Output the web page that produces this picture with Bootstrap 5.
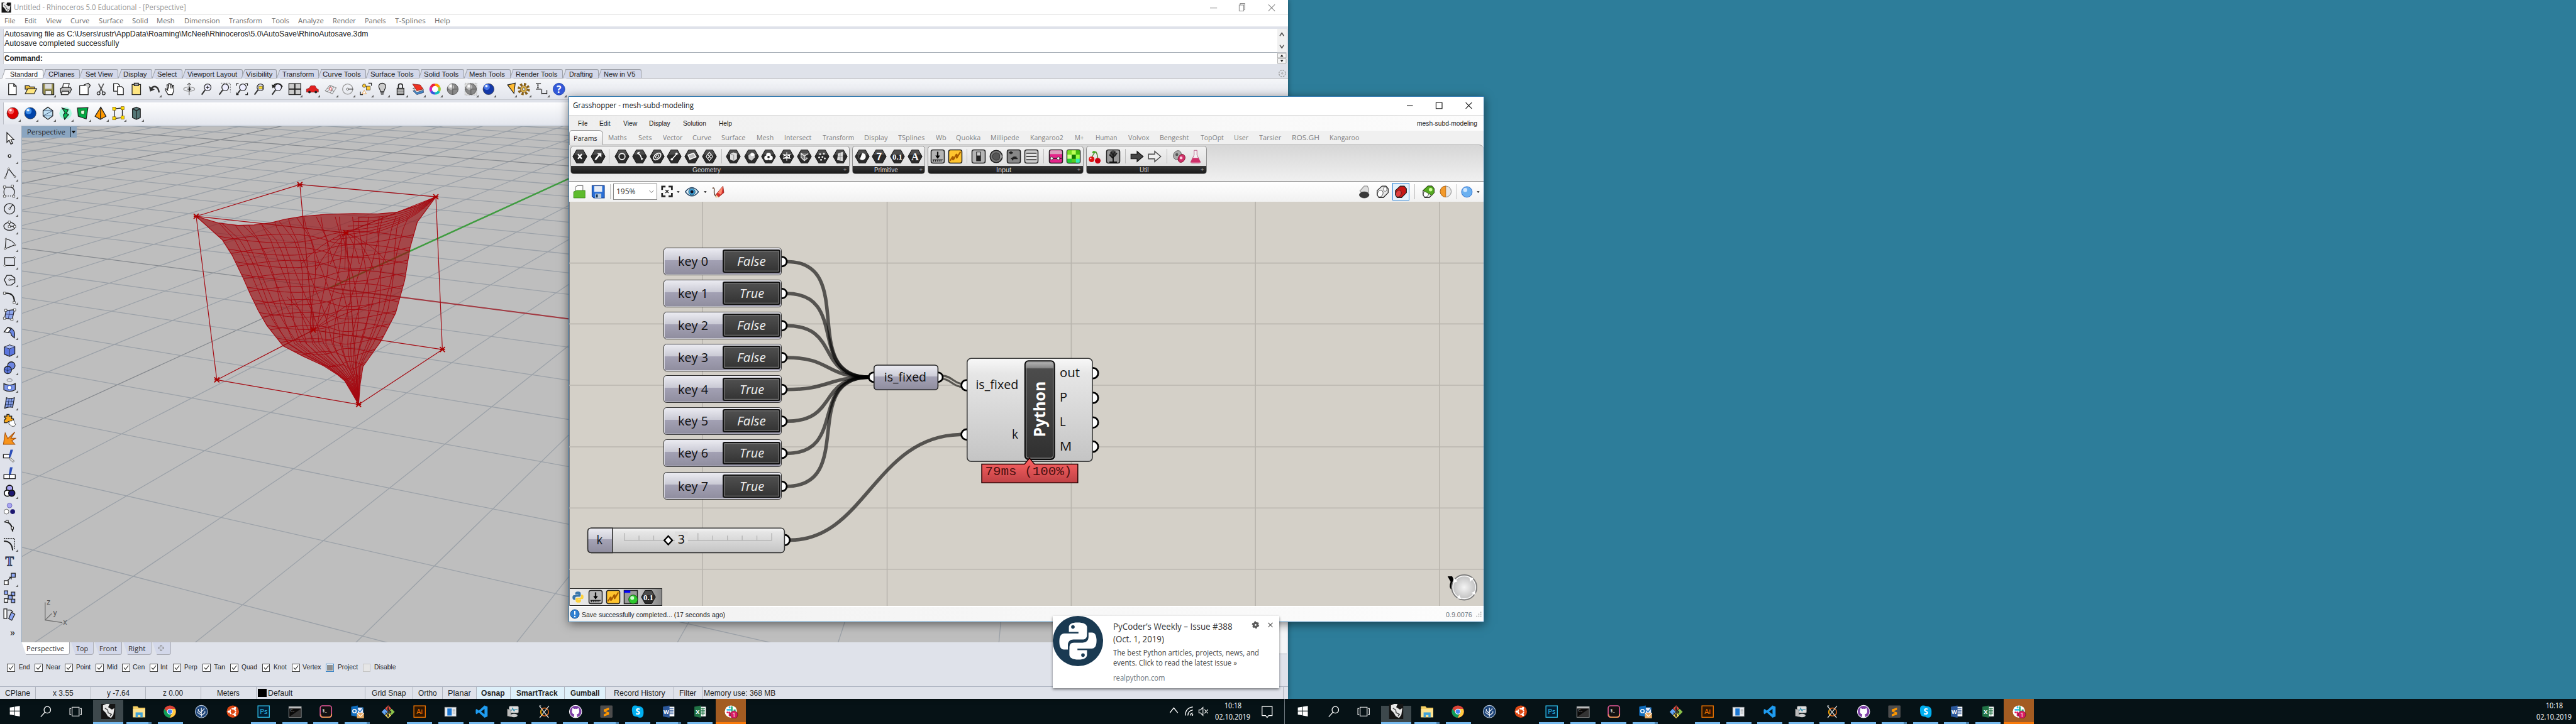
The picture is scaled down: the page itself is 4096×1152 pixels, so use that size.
<!DOCTYPE html>
<html lang="en">
<head>
<meta charset="utf-8">
<title>Desktop - Rhinoceros and Grasshopper</title>
<link href="https://cdn.jsdelivr.net/npm/bootstrap@5.3.0/dist/css/bootstrap.min.css" rel="stylesheet">
<style>
/* .1rem is one unit of the 5120x1440 desktop */
html{font-size:8px}
body{width:512rem;height:144rem;overflow:hidden;background:#2d7d9a;font-family:"Open Sans","Noto Sans",sans-serif;font-size:1.45rem;line-height:1;color:#222}
svg{display:block;flex:none}
.line{display:flex;align-items:center}
.line>*{flex:none}
.fit{white-space:pre;display:inline-block;flex:none;transform-origin:0 50%}
.desk{height:139rem}
/* Rhino */
.rhino{width:256rem;height:139rem;background:#dfe2ea;overflow:hidden;box-shadow:0 0 1rem rgba(0,0,0,.4)}
.r-title{height:2.9rem;background:#fff;color:#949494;font-size:1.5rem}
.r-menu{height:2.3rem;background:#fff;border-top:1px solid #e0e0e0;color:#6c6c6c;font-size:1.45rem}
.r-cmd{height:7rem;margin:.6rem .3rem 0 .6rem;background:#fff;border-left:.2rem solid #c9ccd3;font-family:"Liberation Sans",sans-serif;font-size:1.5rem;color:#222}
.r-hist{height:4.7rem;border-bottom:.15rem solid #a9b0b8;padding:.1rem 0 0 .2rem}
.r-hist .line{height:1.8rem}
.r-in{height:2.2rem;padding-left:.2rem;font-weight:700}
.r-scroll{width:1.8rem;background:#f0f0f0}
.r-tabs{height:1.8rem;margin-top:1rem;border-bottom:.12rem solid #b3b5ba;font-family:"Liberation Sans",sans-serif;font-size:1.42rem;align-items:stretch}
.rt{height:1.7rem;background:#d3d8ea;border-top:.1rem solid #9c9fa6;border-right:.1rem solid #9c9fa6;border-radius:0 .4rem 0 0;position:relative;display:flex;align-items:center;padding-top:.2rem}
.rt::before{content:"";position:absolute;left:-.3rem;top:-.1rem;width:.7rem;height:1.7rem;border-left:.1rem solid #9c9fa6;transform:skewX(-20deg);background:#d3d8ea}
.rt .fit{position:relative}
.rt.act,.rt.act::before{background:#fbfbfd}
.r-bar{height:4.3rem;background:linear-gradient(#f5f6f9,#e2e5ec);border-bottom:.1rem solid #c3c6cd}
.r-bar2{height:4.3rem;margin-top:.5rem;background:linear-gradient(#fdfdfe,#e4e7ee);border-left:.7rem solid #dfe2ea;box-shadow:inset .12rem 0 #b9bcc4}
.r-body{height:105.3rem;margin-top:.3rem}
.r-side{width:4.3rem;flex:none;height:105.1rem;padding-top:.8rem}
.r-tool{height:3.506rem;display:flex;align-items:center;justify-content:center;position:relative;width:3.8rem}
.r-tool.more::after,.hasmore::after{content:"";position:absolute;right:.2rem;bottom:.2rem;border:.35rem solid transparent;border-right-color:#666;border-bottom-color:#666}
.hasmore{position:relative}
.hasmore::after{right:-.2rem;bottom:-.3rem}
.r-main{flex:1 1 0;min-width:0}
.r-view{height:102.7rem;background:#bebebe;position:relative;overflow:hidden;border-top:.1rem solid #98a8b8;border-left:.1rem solid #98a8b8}
.r-vlabel{position:absolute;left:0;top:0;width:10.8rem;height:2.3rem;background:#8aa5c0;color:#222}
.r-panel{width:8rem;flex:none;background:#f4f5f7;border-bottom:.15rem solid #aab0bb;height:105.1rem;margin-right:.2rem}
.r-vtabs{height:2.6rem;font-size:1.45rem;color:#333}
.vt{height:2.6rem;background:#d3d8ea;border-bottom:.1rem solid #a7a9b0;border-right:.1rem solid #a7a9b0;border-radius:0 0 .5rem .5rem;display:flex;align-items:center;justify-content:center;clip-path:polygon(0 0,100% 0,100% 100%,.9rem 100%)}
.vt.act{background:#fff}
.r-osnap{height:3.2rem;margin-top:.9rem;font-family:"Liberation Sans",sans-serif;font-size:1.48rem}
.cb{width:1.6rem;height:1.6rem;border:.12rem solid #444;background:#fff;display:flex}
.cb.dis{border-color:#c5c5c5;background:#e6e6e6}
.cb.mid{border:.2rem solid #3a83c4;background:#8f8f8f;box-shadow:inset 0 0 0 .12rem #fff}
.r-status{height:2.5rem;margin-top:auto;border-top:.12rem solid #a9b0bd;font-family:"Liberation Sans",sans-serif;font-size:1.5rem}
.cell{height:2.4rem;border-right:.12rem solid #b0b4be;display:flex;align-items:center;justify-content:center}
.cell.on{background:#def0fa;font-weight:700}
/* Grasshopper */
.gh{position:absolute;left:113rem;top:19.1rem;width:182rem;height:104.6rem;border:.12rem solid #2b76ad;background:#f0f0f0;box-shadow:0 .4rem 1.8rem rgba(0,0,0,.5);display:flex;flex-direction:column}
.g-title{height:3.8rem;background:#fff;color:#111;font-size:1.5rem;border-bottom:.1rem solid #dcdcdc}
.g-menu{height:3rem;background:linear-gradient(90deg,#efefef,#fcfcfc);font-size:1.42rem;font-family:"Liberation Sans",sans-serif}
.g-tabs{height:2.7rem;color:#808080;font-size:1.45rem;background:#f0f0f0;position:relative}
.g-tabs .fit{position:relative}
.g-first{height:2.9rem;background:linear-gradient(#fff,#e4e4e4);border:.1rem solid #999;border-bottom:0;border-radius:.6rem .8rem 0 0;color:#222;display:flex;align-items:center;padding-left:.7rem}
.g-ribbon{height:7.4rem;background:linear-gradient(#d6d6d6,#f0f0f0);border-top:.15rem solid #a0a0a0;border-bottom:.2rem solid #868686;border-radius:0 .9rem 0 0;align-items:flex-start;padding-top:.2rem}
.g-grp{height:5.6rem;border:.12rem solid #8e8e8e;border-radius:.6rem;background:linear-gradient(#f2f2f2,#d9d9d9);overflow:hidden;display:flex;flex-direction:column}
.g-ics{height:3.8rem}
.g-lab{flex:1;background:linear-gradient(#363636,#1a1a1a);color:#ddd;font-size:1.35rem;font-family:"Liberation Sans",sans-serif;display:flex;align-items:center;position:relative}
.g-lab i{position:absolute;right:.4rem;font-style:normal;font-size:1.2rem;color:#aaa}
.vsep{width:.12rem;height:2.9rem;background:#bdbdbd}
.g-bar{height:4rem;background:linear-gradient(#fff,#f1f1f1)}
.combo{height:3.2rem;border:.12rem solid #8a8a8a;background:#fff;display:flex;align-items:center;padding:0 .4rem;font-size:1.55rem;color:#333}
.sel{height:3.4rem;border:.15rem solid #2f87d8;background:#e6f1fb;display:flex;align-items:center;justify-content:center}
.g-canvas{height:80.4rem;position:relative;background:#d4d0c8;overflow:hidden;box-shadow:inset .12rem 0 #7c7c80}
.g-status{flex:1;background:linear-gradient(90deg,#f1f1f1,#fcfcfc);border-top:.3rem solid #fff;font-size:1.45rem;font-family:"Liberation Sans",sans-serif}
.knode{position:absolute;width:23.5rem;height:5.5rem;left:18.7rem;border:.18rem solid #333;border-radius:.6rem;background:linear-gradient(#ececf2,#c9c9d4 45%,#a3a1b4 46%,#8f8d9e);box-shadow:inset 0 0 0 .1rem #e8e8ee;font-size:2.4rem;color:#111}
.kname{width:11.7rem;text-align:center}
.kval{width:11.5rem;height:4.6rem;border:.25rem solid #111;border-radius:.4rem;background:linear-gradient(#505050,#333);box-shadow:inset 0 0 0 .15rem #777;color:#eee;font-style:italic}
.mini{position:absolute;left:.1rem;bottom:0;width:18.4rem;height:3.5rem;border:.15rem solid #222;border-left:0;background:linear-gradient(90deg,#ececec,#cfcfcf 70%,#888)}
/* notification */
.note{position:absolute;left:209.2rem;top:122.5rem;width:45rem;height:14.4rem;background:#fff;box-shadow:0 .2rem .5rem rgba(0,0,0,.45)}
.n-txt{padding:.9rem 0 0 2rem;flex:none;width:31rem}
.n-txt .line{white-space:pre;height:2rem;font-size:1.55rem;color:#444}
.n-txt .n-head{height:2.5rem;font-size:1.8rem;color:#333}
/* taskbars */
.tbar{width:256rem;height:5rem;background:#061216;color:#fff}
.app{height:5rem;display:flex;flex-direction:column;align-items:center;justify-content:center;position:relative}
.app.on::after{content:"";position:absolute;left:.5rem;right:.5rem;bottom:0;height:.35rem;background:#76b9ed}
.app.two::after{border-right:.7rem solid #4a7fa8}
.app.rh{background:linear-gradient(#061216 .2rem,#3d484c .2rem)}
.tbar.second .app.rh{background:linear-gradient(#061216 1.4rem,#3d484c 1.4rem)}
.app.rh::after,.app.sl::after{left:0;right:0}
.app.sl{background:#a35c22}
.app.sl::after{background:#f97a0a}
.clock{display:flex;flex-direction:column;align-items:center;justify-content:space-between;height:3.8rem;font-size:1.55rem}
</style>
</head>
<body>
<div class="desk position-relative">
  <section class="rhino d-flex flex-column">
    <div class="r-title line" id="rTitle"></div>
    <div class="r-menu line" id="rMenu"></div>
    <div class="r-cmd d-flex">
      <div class="flex-grow-1">
        <div class="r-hist">
          <div class="line"><span class="fit" data-w="723">Autosaving file as C:\Users\rustr\AppData\Roaming\McNeel\Rhinoceros\5.0\AutoSave\RhinoAutosave.3dm</span></div>
          <div class="line"><span class="fit" data-w="228">Autosave completed successfully</span></div>
        </div>
        <div class="r-in line"><span class="fit" data-w="76">Command:</span></div>
      </div>
      <div class="r-scroll"><svg viewBox="0 0 18 70" width="1.8rem" height="7rem"><path d="M5 14l4-6 4 6M5 32l4 6 4-6" fill="none" stroke="#555" stroke-width="2"/><path d="M0 47h18" stroke="#a9b0b8"/><path d="M.5 48.500h17v9h-17zM.5 59h17v9.500h-17z" fill="#f3f3f3" stroke="#999"/><path d="M6 55l3-4 3 4zM6 62l3 4 3-4z" fill="#111"/></svg></div>
    </div>
    <div class="r-tabs line" id="rTabs"></div>
    <div class="r-bar line" id="rBar"></div>
    <div class="r-bar2 line" id="rBar2"></div>
    <div class="r-body d-flex">
      <div class="r-side" id="rSide"></div>
      <div class="r-main">
        <div class="r-view">
          <svg id="view" viewBox="43 252 2460 1027" width="246rem" height="102.7rem"></svg>
          <div class="r-vlabel line" id="vLabel"></div>
        </div>
        <div class="r-vtabs line" id="vTabs"></div>
      </div>
      <div class="r-panel"></div>
    </div>
    <div class="r-osnap line" id="osnap"></div>
    <div class="r-status line" id="rStatus"></div>
  </section>

  <section class="gh">
    <div class="g-title line" id="gTitle"></div>
    <div class="g-menu line" id="gMenu"></div>
    <div class="g-tabs line" id="gTabs"></div>
    <div class="g-ribbon line" id="gRibbon"></div>
    <div class="g-bar line" id="gBar"></div>
    <div class="g-canvas" id="canvas">
      <svg id="wires" viewBox="1131 402 1818 804" width="181.8rem" height="80.4rem"></svg>
      <div class="mini line" id="mini"></div>
    </div>
    <div class="g-status line" id="gStatus"></div>
  </section>

  <section class="note d-flex">
    <svg viewBox="0 0 100 100" width="10rem" height="10rem"><circle cx="50" cy="50" r="50" fill="#1a3a52"/>
      <path id="snake" d="M49 13c-11 0-17 3-17 10v9h19v3H23c-7 0-10 6-10 16 0 10 3 16 9 16h8v-9c0-7 5-11 11-11h18c6 0 9-4 9-9V23c0-7-7-10-19-10z" fill="#fff"/><circle cx="40" cy="22" r="3.500" fill="#1a3a52"/>
      <path d="M51 87c11 0 17-3 17-10v-9H49v-3h28c7 0 10-6 10-16 0-10-3-16-9-16h-7v9c0 7-5 11-11 11H42c-6 0-9 4-9 9v15c0 7 7 10 18 10z" fill="#fff"/><circle cx="60" cy="78" r="3.500" fill="#1a3a52"/><path d="M69 33v9c0 6-4 10-10 10H41c-6 0-9 4-9 10v5" fill="none" stroke="#1a3a52" stroke-width="1.500"/></svg>
    <div class="n-txt">
      <div class="line n-head"><span class="fit" data-w="237">PyCoder’s Weekly – Issue #388</span></div>
      <div class="line n-head"><span class="fit" data-w="101">(Oct. 1, 2019)</span></div>
      <div class="line mt-2"><span class="fit" data-w="290">The best Python articles, projects, news, and</span></div>
      <div class="line"><span class="fit" data-w="246">events. Click to read the latest issue »</span></div>
      <div class="line mt-3 text-secondary"><span class="fit" data-w="103">realpython.com</span></div>
    </div>
    <svg class="position-absolute end-0 top-0" viewBox="0 0 60 36" width="6rem" height="3.6rem"><circle cx="13" cy="18" r="3.800" fill="none" stroke="#5a5a5a" stroke-width="4"/><circle cx="13" cy="18" r="6" fill="none" stroke="#5a5a5a" stroke-width="2.500" stroke-dasharray="3.200 3.080"/><path d="M38 13.500l9 9M47 13.500l-9 9" stroke="#444" stroke-width="1.300"/></svg>
  </section>
</div>
<div class="d-flex">
  <div class="tbar line" id="bar1"></div>
  <div class="tbar second line" id="bar2"></div>
</div>

<script src="https://cdn.jsdelivr.net/npm/bootstrap@5.3.0/dist/js/bootstrap.bundle.min.js"></script>
<script>
const $=id=>document.getElementById(id);
const svg=(inner,w=26,h=w,vb='0 0 32 32')=>`<svg viewBox="${vb}" width="${w/10}rem" height="${h/10}rem">${inner}</svg>`;
const fit=(t,w)=>`<span class="fit" data-w="${w}">${t}</span>`;
/* lays items out left to right; each one is [content, start, end, class, inner width] */
function row(id,items,x=0){
  $(id).insertAdjacentHTML('beforeend',items.map(([c,a,b,cls,w])=>{
    const m=a-x;x=b;
    const inner=c.startsWith('<')?c:fit(c,w||b-a);
    return `<div class="${cls||''}" style="margin-left:${m/10}rem;width:${(b-a)/10}rem">${inner}</div>`;
  }).join(''));
}
const cen=(list,s,cls)=>list.map(([n,c,k])=>[svg(I[n],s),c-s/2,c+s/2,k===undefined?cls:k]);
const K='stroke="#222" stroke-width="1.800"',N='fill="none"';
const ball=(c,d)=>`<circle cx="16" cy="16" r="13" fill="${d}" stroke="#333"/><circle cx="12" cy="11" r="7" fill="${c}" opacity=".75"/><circle cx="11" cy="9" r="3" fill="#fff" opacity=".9"/>`;
const cyl=(c,d)=>`<path d="M4 13L15 3h9l5 6v9L18 29H8l-4-6z" fill="${c}" ${K}/><ellipse cx="11" cy="20" rx="6" ry="8" transform="rotate(25 11 20)" fill="${d}" stroke="#222"/>`;
const HX=i=>`<path d="M9 2h14l8 14-8 14H9L1 16z" fill="#2a2a2a" stroke="#000"/><path d="M9.500 3h13l5 9h-23z" fill="#666" opacity=".6"/>${i}`;
const SQ=(i,f='#b5b5b5')=>`<rect x="2" y="2" width="28" height="28" rx="4" fill="${f}" stroke="#222" stroke-width="2"/>${i}`;
const W='stroke="#fff" stroke-width="2.200" fill="none"';
const scrib=SQ('<path d="M5 25l5-8q2-2 1 3t2 1l5-9q2-2 1 4t2 0l6-10" fill="none" stroke="#a85c00" stroke-width="3"/>','#ffc42e');
const lens=`<circle cx="18" cy="12" r="8" fill="#eef" ${K}/><path d="M12 18L4 29" stroke="#333" stroke-width="3"/>`;
const I={
 page:`<path d="M7 3h12l6 6v20H7z" fill="#fff" ${K}/><path d="M19 3v6h6" ${N} ${K}/>`,
 open:`<path d="M3 8h9l3 3h10v5H3z" fill="#e5b93c" ${K}/><path d="M3 27l6-12h21l-6 12z" fill="#ffe680" ${K}/>`,
 save:`<path d="M3 3h26v26H6l-3-3z" fill="#9a9250" ${K}/><path d="M8 4h16v11H8z" fill="#ddd"/><path d="M9 20h14v9H9z" fill="#eee" stroke="#222"/>`,
 print:`<path d="M10 3h14l-3 11H8z" fill="#fff" ${K}/><path d="M3 15l5-3h19l2 5-4 8H4z" fill="#bbb" ${K}/><path d="M7 21h16l-2 8H5z" fill="#eee" ${K}/>`,
 props:`<path d="M4 8h20v21H4z" fill="#fff" ${K}/><path d="M14 6l10-4 5 5-3 6" fill="#ccc" ${K}/>`,
 cut:`<path d="M10 3l10 20M22 3L12 23" stroke="#555" stroke-width="2.500"/><circle cx="10" cy="26" r="3.500" ${N} ${K}/><circle cx="22" cy="26" r="3.500" ${N} ${K}/>`,
 copy:`<path d="M4 3h10l4 4v14H4z" fill="#fff" ${K}/><path d="M13 10h10l4 4v15H13z" fill="#fff" ${K}/>`,
 paste:`<rect x="6" y="5" width="20" height="24" fill="#ffe680" ${K}/><rect x="11" y="2" width="10" height="6" fill="#aaa" ${K}/>`,
 undo:`<path d="M4 9l3 13 11-5z" fill="#333"/><path d="M8 17C15 6 26 8 28 24" ${N} stroke="#333" stroke-width="3.500"/>`,
 hand:`<path d="M11 29C6 22 4 18 4 15c3-1 4 3 6 4L8 6c3-1 4 1 4 9V3c3-1 4 0 4 11V4c3-1 4 1 4 11l2-8c3 0 2 3 2 9 0 7-2 9-3 13z" fill="#fff" ${K}/>`,
 rotv:`<ellipse cx="16" cy="16" rx="13" ry="5" ${N} stroke="#999" stroke-width="2"/><path d="M16 2v28M12 6l4-4 4 4" ${N} stroke="#555" stroke-width="1.600"/><path d="M12 16h9m-4-4v8" stroke="#222" stroke-width="2"/>`,
 zoomd:lens+`<path d="M14 12h8M18 8v8" ${K}/>`,
 zoomw:lens+`<path d="M8 2h22v22" ${N} stroke="#222" stroke-dasharray="3 3"/>`,
 zoome:lens+`<path d="M3 8V3h5M24 3h5v5M29 24v5h-5M3 24v5h5" ${N} ${K}/>`,
 zooms:lens+`<rect x="14" y="9" width="9" height="7" fill="#fd3" stroke="#333"/>`,
 zoomu:lens+`<path d="M3 5l2 9 8-5z" fill="#222"/><path d="M6 9c6-8 18-8 22 2" ${N} stroke="#222" stroke-width="2.500"/>`,
 four:`<rect x="2" y="3" width="28" height="26" fill="#ccc" ${K}/><path d="M16 3v26M2 16h28" stroke="#222" stroke-width="3"/>`,
 car:`<path d="M2 16l6-2 4-6h10l4 7 4 2v6H2z" fill="#e02020" stroke="#711"/><circle cx="9" cy="23" r="3" fill="#222"/><circle cx="24" cy="23" r="3" fill="#222"/>`,
 cplane:`<path d="M3 20L14 7l15 6-9 14zM8 14l15 7M16 9l-8 14M23 11l-8 14" ${N} stroke="#888" stroke-width="1.500"/><rect x="13" y="13" width="5" height="5" fill="#fff" stroke="#d22"/>`,
 circ:`<circle cx="16" cy="16" r="12" ${N} stroke="#999" stroke-width="2"/><path d="M16 16h13" ${K}/><circle cx="16" cy="16" r="2.500" fill="#fff" stroke="#222"/>`,
 shapes:`<circle cx="12" cy="8" r="4" fill="#fc3" stroke="#222"/><rect x="17" y="9" width="9" height="9" fill="#fc3" stroke="#222"/><path d="M7 27l5-8 5 8z" fill="#fff" stroke="#d70"/><path d="M22 2h7v6M3 22v7h6" ${N} ${K}/>`,
 bulb:`<path d="M16 2c-6 0-9 5-8 9 1 5 4 7 4 11h8c0-4 3-6 4-11 1-4-2-9-8-9z" fill="#ccc" ${K}/><path d="M12 25h8M13 28h6" ${K}/>`,
 lock:`<rect x="8" y="14" width="16" height="15" fill="#999" ${K}/><path d="M11 14V8c0-6 10-6 10 0v6" ${N} stroke="#222" stroke-width="2.500"/><path d="M9 19h14M9 24h14" stroke="#ddd"/>`,
 layer:`<path d="M4 20l9 9 16-5-1-6z" fill="#48c" stroke="#124"/><path d="M4 14l9 10 16-6-3-5z" fill="#eee" stroke="#333"/><path d="M3 4l18 2 7 10-15 4z" fill="#e32" stroke="#711"/>`,
 wheel:`<g ${N} stroke-width="6"><path d="M16 6a10 10 0 0 1 9 5" stroke="#f90"/><path d="M25 11a10 10 0 0 1 0 10" stroke="#9c3"/><path d="M25 21a10 10 0 0 1-9 5" stroke="#1bb"/><path d="M16 26a10 10 0 0 1-9-5" stroke="#35d"/><path d="M7 21a10 10 0 0 1 0-10" stroke="#c2b"/><path d="M7 11a10 10 0 0 1 9-5" stroke="#e23"/></g><circle cx="16" cy="16" r="7" fill="#fff"/>`,
 gball:ball('#eee','#888')+`<path d="M16 3v26M3 16h26" stroke="#444"/>`,
 gball2:`<rect x="2" y="2" width="28" height="28" fill="#ddd" stroke="#888" stroke-dasharray="2 2"/>`+ball('#eee','#888')+`<path d="M16 3v26M3 16h26" stroke="#444"/>`,
 bball:ball('#58f','#1438a8'), rball:ball('#f77','#d00'), bball2:ball('#5af','#04a'),
 tri:`<path d="M12 6l18-4-3 24z" fill="#fb3" ${K}/>`,
 gear:`<circle cx="16" cy="16" r="11" ${N} stroke="#876018" stroke-width="7" stroke-dasharray="5 3.640"/><circle cx="16" cy="16" r="8" fill="#dcb24a" stroke="#643"/><circle cx="16" cy="16" r="3" fill="#eee" stroke="#222"/>`,
 dim:`<path d="M3 3h12M3 16h12M8 5v9M17 16v12M29 18v10M18 26h10" ${N} ${K}/><path d="M6 7l2-3 2 3zM6 12l2 3 2-3z"/>`,
 help:`<circle cx="16" cy="16" r="14" fill="#3358d8" stroke="#123a9c"/><text x="16" y="24.500" font-size="23" font-weight="700" text-anchor="middle" fill="#fff">?</text>`,
 cage:`<path d="M16 2l11 8v12l-11 8-11-8V10z" fill="#bfe0f5" ${K}/><path d="M5 10h22L5 22h22" ${N} stroke="#124"/>`,
 green1:`<circle cx="16" cy="16" r="14" fill="#7fc" opacity=".6"/><path d="M8 4l14 4-4 8 5 3-9 11-3-10 4-5z" fill="#0b5" ${K}/>`,
 green2:`<path d="M3 4l24-1-4 26-18-6z" fill="#0a4" ${K}/><path d="M11 10l9-1-2 10-7-2z" fill="#dfd" stroke="#040"/>`,
 pyr:`<path d="M16 2l12 21-13 7-12-7z" fill="#f90" ${K}/><path d="M16 2l-1 28" ${K}/>`,
 ybox:`<path d="M7 6l18-2v22l-18 2z" ${N} ${K}/><g fill="#fd0" stroke="#750"><rect x="3" y="2" width="7" height="7"/><rect x="22" y="1" width="7" height="7"/><rect x="3" y="24" width="7" height="7"/><rect x="22" y="22" width="7" height="7"/></g>`,
 book:`<path d="M8 6l9-4 9 4v20l-9 4-9-4z" fill="#577" ${K}/><path d="M8 6l9 4 9-4M17 10v20" ${N} ${K}/>`,
 /* sidebar */
 arrow:`<path d="M10 3v22l5-5 4 9 4-2-4-8h7z" fill="#fff" ${K}/>`,
 pt:`<circle cx="16" cy="16" r="3" fill="#fff" ${K}/>`,
 pline:`<path d="M6 26L14 5l14 18" ${N} ${K}/><g fill="#fff" stroke="#222"><circle cx="6" cy="26" r="2"/><circle cx="14" cy="5" r="2"/><circle cx="28" cy="23" r="2"/></g>`,
 crv:`<path d="M6 7h14M5 26C2 20 3 14 5 9M20 7c8 4 8 12 5 19" ${N} ${K}/><path d="M7 27h16" ${N} ${K} stroke-dasharray="2 3"/><g fill="#fff" stroke="#222"><path d="M2 4h5v5H2zM20 2h5v5h-5zM23 25h5v5h-5zM2 25h5v5H2z"/></g>`,
 circ2:`<circle cx="16" cy="16" r="12" ${N} ${K}/><path d="M16 16l7-9" ${K}/><circle cx="16" cy="16" r="2" fill="#fff" stroke="#222"/>`,
 ell:`<ellipse cx="16" cy="16" rx="13" ry="9" ${N} ${K}/><path d="M16 5v11h12" ${N} ${K}/><g fill="#fff" stroke="#222"><path d="M13 4h5v5h-5zM13 14h5v5h-5zM25 14h5v5h-5z"/></g>`,
 arc:`<path d="M6 27L8 5c12 2 18 8 20 13z" ${N} ${K}/><g fill="#fff" stroke="#222"><circle cx="6" cy="27" r="2"/><circle cx="8" cy="5" r="2"/><circle cx="28" cy="18" r="2"/></g>`,
 rect:`<path d="M5 7h22v18H5z" ${N} ${K}/><g fill="#fff" stroke="#222"><circle cx="27" cy="7" r="2"/><circle cx="5" cy="25" r="2"/></g>`,
 poly:`<path d="M4 16l6-10h10l8 6v10l-8 6H10z" ${N} ${K}/><path d="M16 16h11" ${K}/><circle cx="16" cy="16" r="2" fill="#fff" stroke="#222"/>`,
 fil:`<path d="M5 7c14-2 22 4 22 20" ${N} stroke="#222" stroke-width="3"/><g fill="#fff" stroke="#222"><path d="M2 4h5v5H2zM24 25h5v5h-5z"/></g>`,
 srf:`<path d="M8 6l19-2-5 22-17-3z" fill="#8fa8ee" ${K}/><path d="M17 5l-4 20M6 14l19 1" stroke="#225"/><g fill="#fff" stroke="#222"><path d="M5 3h5v5H5zM25 2h5v5h-5zM2 21h5v5H2zM19 24h5v5h-5z"/></g>`,
 patch:`<path d="M4 14L12 4c12 1 18 10 15 24l-7-6c1-6-6-9-16-8z" fill="#6b87e0" ${K}/><path d="M4 14L12 4l7 4-6 8z" fill="#fff" ${K}/>`,
 box:`<path d="M4 9l12-5 12 4v16l-12 6-12-5z" fill="#5c76dd" ${K}/><path d="M4 9l12 4 12-5-12-4z" fill="#a9baf7" stroke="#222"/><path d="M16 13v17" stroke="#222"/>`,
 balls:`<circle cx="20" cy="11" r="8.500" fill="#6d86e2" ${K}/><circle cx="12" cy="21" r="8.500" fill="#5a74d8" ${K}/><path d="M3 20q9 4 17 0M12 12v17" ${N} stroke="#124"/>`,
 cyl2:`<ellipse cx="16" cy="4" rx="6" ry="3" ${N} stroke="#555"/><path d="M3 12q13 7 26 0v14q-13 7-26 0z" fill="#7f97ea" ${K}/><circle cx="16" cy="21" r="5" fill="#fff" stroke="#46c" stroke-width="2"/>`,
 mesh:`<path d="M9 4q8 4 18 0l-4 22q-8-2-18 2z" fill="#8aa2ec" ${K}/><path d="M15 5l-3 22M21 5l-3 21M7 12q9 3 18 0M6 20q9-1 18 0" ${N} stroke="#124"/>`,
 puz:`<path d="M4 6h6V2h5v4h6v6h4v5h-4v5h-5l-2-4-4 3H4v-6l4-4-4-3z" fill="#f7a81c" ${K}/><path d="M16 17h5l2-3 4 3v5l3 2-3 5h-6l-3-3-4-2z" fill="#fff" stroke="#222"/>`,
 boom:`<path d="M2 30L6 4l6 13L28 2 19 16l11 0-9 6 7 8z" fill="#f7941d" stroke="#a44a00" stroke-width="1.500"/>`,
 trim:`<path d="M2 13h14v8H2z" fill="#fff" ${K}/><path d="M18 20l9 8-3 3-8-7z" fill="#ddd" stroke="#444"/><path d="M14 20L18 2h6l-5 16z" fill="#2d4fb8"/>`,
 split:`<path d="M3 19h26v9H3zM16 19v9" fill="#fff" ${K}/><path d="M14 19L17 2h6l-4 17z" fill="#2d4fb8"/>`,
 bool:`<circle cx="16" cy="10" r="7" fill="#a9a4f2" stroke="#111" stroke-width="2.500"/><circle cx="11" cy="21" r="7" fill="#fff" stroke="#111" stroke-width="2.500"/><circle cx="21" cy="21" r="7" fill="#1b1670" stroke="#111" stroke-width="2.500"/>`,
 three:`<circle cx="16" cy="9" r="5.500" fill="#a9a4f2" stroke="#55a"/><circle cx="9" cy="23" r="5.500" fill="#fff" stroke="#222"/><circle cx="23" cy="23" r="5.500" fill="#1b1670"/>`,
 ced:`<path d="M4 6c12 0 18 8 19 22" ${N} stroke="#222" stroke-width="3"/><g fill="#fff" stroke="#222" stroke-width="1.500"><path d="M8 3h5v5H8zM20 18h5v5h-5z"/></g>`,
 ced2:`<path d="M3 4h24v24" ${N} stroke="#222" stroke-width="2" stroke-dasharray="3 2"/><path d="M3 10c13 0 19 8 20 21" ${N} stroke="#222" stroke-width="3"/>`,
 txt:`<text x="16" y="26" font-family="Liberation Serif" font-size="29" font-weight="700" text-anchor="middle" fill="#6d8bf0" stroke="#123" stroke-width="1.200">T</text>`,
 move:`<path d="M20 3h9v9h-9z" fill="#8fa8f5" ${K}/><path d="M4 20h9v9H4z" fill="#fff" ${K}/><path d="M12 19l8-7M15 12h5v5" ${N} ${K}/>`,
 arr:`<g fill="#8fa8f5" ${K}><path d="M4 3h8v8H4zM20 6h8v8h-8zM13 13h9v9h-9zM20 22h8v8h-8z"/><path d="M4 21h8v8H4z" fill="#fff"/></g>`,
 rot:`<path d="M3 4h7v22H3z" fill="#fff" ${K}/><path d="M20 12l8 4-7 14-7-4z" fill="#8fa8f5" ${K}/><path d="M12 7q8-2 12 5" ${N} ${K}/>`,
 /* ribbon */
 hx:HX(`<path d="M12 11l8 10M20 11l-8 10" stroke="#fff" stroke-width="3"/>`),
 hv:HX(`<path d="M10 23l8-10" stroke="#fff" stroke-width="3.500"/><path d="M14 9h9v9z" fill="#fff"/>`),
 ho:HX(`<circle cx="16" cy="16" r="6.500" ${W}/>`),
 ha:HX(`<path d="M11 9q8 2 9 13M11 9l5-2M20 23l3-3" ${W}/>`),
 hs:HX(`<ellipse cx="16" cy="16" rx="9" ry="5.500" transform="rotate(-40 16 16)" ${W}/><ellipse cx="16" cy="16" rx="4" ry="2.500" transform="rotate(-40 16 16)" fill="none" stroke="#fff" stroke-width="1.500"/>`),
 hl:HX(`<path d="M12 21l9-10" ${W}/><circle cx="11" cy="22" r="2.500" fill="#fff"/><circle cx="21" cy="10" r="2.500" fill="#fff"/>`),
 hp:HX(`<path d="M8 13l12-4 5 8-13 5z" fill="#bbb" stroke="#fff" stroke-width="2"/>`),
 hq:HX(`<path d="M16 7l7 9-7 9-7-9zM12 11l8 10M20 11l-8 10" fill="none" stroke="#fff" stroke-width="1.500"/>`),
 hb:HX(`<path d="M10 11l6-3 7 2v11l-6 4-7-3z" fill="#ddd" stroke="#fff"/><path d="M10 11l7 2v12" fill="none" stroke="#777"/>`),
 hc:HX(`<path d="M9 14l8-7 6 5v6l-7 7-6-4z" fill="#ccc"/><ellipse cx="18" cy="12" rx="4" ry="3" fill="#fff"/>`),
 hg:HX(`<g fill="#fff"><circle cx="12" cy="19" r="5"/><circle cx="20" cy="19" r="5"/><circle cx="16" cy="13" r="5"/></g><circle cx="16" cy="17" r="2.500" fill="#222"/>`),
 hm:HX(`<path d="M16 7v18M8 11l16 10M24 11L8 21M10 12h12v8H10z" fill="none" stroke="#fff" stroke-width="1.400"/>`),
 ht:HX(`<path d="M9 9l7 6 8-5M16 15v10M9 9v9l7 7 7-6" fill="#777" stroke="#eee" stroke-width="1.500"/>`),
 hd:HX(`<g fill="#eee"><circle cx="12" cy="11" r="2"/><circle cx="20" cy="10" r="2"/><circle cx="10" cy="18" r="2"/><circle cx="17" cy="17" r="2"/><circle cx="22" cy="20" r="2"/><circle cx="14" cy="23" r="2"/></g>`),
 hr:HX(`<path d="M12 10l9-3v18l-11-2z" fill="#ddd" stroke="#fff"/><path d="M16 9v15M11 16h10" stroke="#777"/>`),
 hbo:HX(`<circle cx="16" cy="16" r="7.500" fill="#fff"/><path d="M16 8.500a7.500 7.500 0 0 0-5 13z" fill="#222"/>`),
 h7:HX(`<text x="16" y="24" font-size="21" font-family="Liberation Sans" font-weight="700" text-anchor="middle" fill="#fff">7</text>`),
 h01:HX(`<text x="16" y="22" font-size="17" font-family="Liberation Serif" font-weight="700" text-anchor="middle" fill="#fff">0.1</text>`),
 hA:HX(`<text x="16" y="24" font-size="22" font-family="Liberation Serif" font-weight="700" text-anchor="middle" fill="#fff">A</text>`),
 sl:SQ(`<path d="M16 6v10" stroke="#111" stroke-width="3"/><path d="M11 14h10l-5 7z"/><path d="M5 23h22M7 23v4M11 23v4M15 23v4M19 23v4M23 23v4" stroke="#111" stroke-width="1.600"/>`),
 pan:scrib,
 bt:SQ(`<rect x="11" y="6" width="10" height="20" fill="#222"/><rect x="12.500" y="7" width="7" height="7" fill="#ccc"/>`),
 kn:`<circle cx="16" cy="16" r="13" fill="#777" stroke="#222" stroke-width="2"/><circle cx="16" cy="16" r="8" fill="#555" stroke="#222"/><path d="M24 10l6 6-6 6z" fill="#999"/>`,
 md:SQ(`<path d="M6 8h8M10 5v6M10 20h14M14 24q-3-8 8-6" stroke="#222" stroke-width="3" fill="none"/>`,'#888'),
 vl:SQ(`<path d="M5 9h22M5 16h22M5 23h22" stroke="#222" stroke-width="2"/><path d="M6 11h20v3H6zM6 18h20v3H6z" fill="#eee"/>`,'#ccc'),
 pk:SQ(`<path d="M3 6q0-3 3-3h20q3 0 3 3v5H3z" fill="#d9a0bd"/><path d="M4 20h24" stroke="#222" stroke-width="2"/><circle cx="7" cy="20" r="3" fill="#fff" stroke="#222"/><circle cx="21" cy="20" r="3" fill="#fff" stroke="#222"/>`,'#e5258a'),
 gr:SQ(`<g><path d="M3 3h9v9H3z" fill="#7d2"/><path d="M12 3h9v9h-9z" fill="#bf5"/><path d="M21 3h8v9h-8z" fill="#4b1"/><path d="M3 12h9v9H3z" fill="#cf8"/><path d="M12 12h9v9h-9z" fill="#170"/><path d="M3 21h9v8H3z" fill="#2c3"/><path d="M21 12h8v9h-8z" fill="#9f4"/><path d="M21 21h8v8h-8z" fill="#3eb"/></g>`,'#5c2'),
 ch:`<path d="M9 20Q12 10 18 6M22 22Q22 12 18 6" stroke="#583" stroke-width="2" fill="none"/><path d="M18 6Q12 1 10 8q5 3 8-2z" fill="#4a2"/><circle cx="9" cy="22" r="6" fill="#d11"/><circle cx="22" cy="25" r="6" fill="#c01"/><circle cx="7" cy="20" r="1.800" fill="#fbb"/>`,
 tr:SQ(`<path d="M16 28V14M16 20L8 12M16 18l8-9M16 14l-4-7M16 14l3-8M8 28h16" stroke="#111" stroke-width="2.500" fill="none"/><circle cx="16" cy="10" r="7" fill="#222" opacity=".7"/>`,'#999'),
 ad:`<path d="M3 11h13V5l13 11-13 11v-6H3z" fill="#444" stroke="#111" stroke-width="1.500"/>`,
 al:`<path d="M3 11h13V5l13 11-13 11v-6H3z" fill="#eee" stroke="#444" stroke-width="1.800"/>`,
 cl:`<ellipse cx="12" cy="13" rx="8" ry="10" transform="rotate(30 12 13)" fill="#aaa" stroke="#555"/><circle cx="11" cy="12" r="3" fill="#555"/><ellipse cx="21" cy="20" rx="7" ry="9" transform="rotate(30 21 20)" fill="#d0306a" stroke="#712"/><circle cx="20" cy="19" r="3" fill="#fcd"/>`,
 fl:`<path d="M13 3h6v10l7 14q1 3-3 3H9q-4 0-3-3l7-14z" fill="#f3f3f3" stroke="#a36"/><path d="M10 19h12l4 8q1 2-3 2H9q-4 0-3-2z" fill="#d0306a"/>`,
 /* grasshopper toolbar */
 gopen:`<path d="M7 14V5l5-3h12v12" fill="#fff" stroke="#777" stroke-width="1.500"/><path d="M3 16l7-3h19v17H3z" fill="#5dbb2c" stroke="#2f7a10"/>`,
 gsave:`<path d="M2 2h28v28H6l-4-4z" fill="#2a6fd6" stroke="#113c8c" stroke-width="1.500"/><path d="M7 3h18v13H7z" fill="#e8edf5"/><path d="M9 20h14v10H9z" fill="#bcd"/><path d="M11 22h4v7h-4z" fill="#135"/>`,
 zx:`<path d="M3 12V3h9M20 3h9v9M29 20v9h-9M12 29H3v-9" stroke="#222" stroke-width="4.500" fill="none"/><path d="M12 12l8 8M20 12l-8 8" stroke="#222" stroke-width="2.500"/>`,
 eye:`<path d="M1 16Q16-3 31 16 16 35 1 16z" fill="#dff1fa" stroke="#246" stroke-width="2"/><circle cx="16" cy="16" r="7.500" fill="#3d9fd6" stroke="#134"/><circle cx="16" cy="16" r="3.500" fill="#112"/>`,
 sk:`<path d="M4 8q5-3 4 6t6 14" stroke="#532" stroke-width="2" fill="none"/><path d="M12 22L28 3l2 15-12 10z" fill="#d9332c" stroke="#711"/><path d="M16 18L28 3l-4 20z" fill="#ff8a70"/><path d="M12 22l6 6-7 2z" fill="#f5cfa0"/>`,
 d1:`<path d="M6 14L16 3h7l3 6v8L16 22z" fill="#ddd" stroke="#888" stroke-width="1.500"/><ellipse cx="16" cy="23" rx="11" ry="7" fill="#3a3a3a" stroke="#222"/>`,
 d2:cyl('#e8e8e8','#fff')+`<ellipse cx="22" cy="10" rx="4" ry="5" fill="#fff" stroke="#444"/>`,d3:cyl('#c81818','#e04040'),d4:cyl('#eee','#fff')+`<path d="M4 13L15 3h9l5 6v9l-5 6z" fill="#5a2" stroke="#240"/><circle cx="21" cy="11" r="4" fill="#cf9"/>`,
 d5:`<circle cx="16" cy="16" r="13" fill="#e5e5e5" stroke="#555"/><path d="M16 3a13 13 0 0 0 0 26z" fill="#f39a2a" stroke="#a50"/>`,
 d6:`<circle cx="16" cy="16" r="13" fill="#6ab0f0" stroke="#26c" stroke-width="1.500"/><circle cx="12" cy="11" r="5" fill="#cfe6ff"/>`,
 dd:`<path d="M8 12h16l-8 10z" fill="#111"/>`,
 py:`<path d="M16 2c-5 0-7 2-7 5v3h8v1H6c-3 0-4 3-4 6s2 6 4 6h3v-4c0-3 2-4 4-4h7c2 0 3-2 3-4V7c0-3-2-5-7-5z" fill="#3a76ab"/><path d="M17 30c5 0 7-2 7-5v-3h-8v-1h11c3 0 3-3 3-6s-1-5-3-5h-3v4c0 3-2 4-4 4h-7c-2 0-3 2-3 4v3c0 3 2 5 7 5z" fill="#fdd23e"/>`,
 gb:`<rect x="2" y="2" width="28" height="28" fill="#9a9a9a" stroke="#222" stroke-width="2"/><path d="M2 2h13v5H2z" fill="#00f"/><circle cx="21" cy="21" r="9.500" fill="#2ec82e" stroke="#040"/><circle cx="19" cy="18" r="4" fill="#cfc"/>`,
 info:`<circle cx="16" cy="16" r="14" fill="#2f7fd2" stroke="#134a8c" stroke-width="2"/><path d="M16 6v12" stroke="#fff" stroke-width="4"/><circle cx="16" cy="24" r="2.500" fill="#fff"/>`,
 /* taskbar */
 win:`<path d="M5 8l9-1.500V15H5zM15.500 6.300L27 4.500V15H15.500zM5 16.500h9V25l-9-1.500zM15.500 16.500H27V27.500l-11.500-1.800z" fill="#fff"/>`,
 find:`<circle cx="19" cy="12" r="7.500" fill="none" stroke="#fff" stroke-width="1.800"/><path d="M13.500 17.500L4 28" stroke="#fff" stroke-width="1.800"/>`,
 tv:`<path d="M8 6h16v20H8zM6 9H3v14h3M26 9h3v14h-3" fill="none" stroke="#fff" stroke-width="1.600"/>`,
 rh:`<rect x="1" y="0" width="30" height="32" fill="#151515"/><path d="M5 3l7-3h7l-3 7 8 5 5-3-2 14-5 7-7-4-4-7-6-6z" fill="#e8e8e8"/><path d="M9 9l6 4 1 6 7 3-3 4" fill="none" stroke="#444" stroke-width="2"/>`,
 ex:`<path d="M2 4h10l3 3h15v22H2z" fill="#f5cf63"/><path d="M2 10h28v19H2z" fill="#fde28f"/><path d="M8 29V18h16v11h-5v-5h-6v5z" fill="#3fa2d9"/>`,
 cr:`<circle cx="16" cy="16" r="14" fill="#db4437"/><path d="M3.500 9.500A14 14 0 0 0 15 30l6-11H11z" fill="#0f9d58"/><path d="M16 30a14 14 0 0 0 12-20H16l6 8z" fill="#ffcd40"/><circle cx="16" cy="16" r="6.500" fill="#fff"/><circle cx="16" cy="16" r="5" fill="#4285f4"/>`,
 st:`<circle cx="16" cy="16" r="14" fill="#1d4478" stroke="#b9cbe0" stroke-width="1.500"/><path d="M16 28V7M16 20L9 14v-4M16 16l6-5V8M16 25l8-6v-4M16 24l-8-5v-3" stroke="#fff" stroke-width="1.600" fill="none"/>`,
 ub:`<circle cx="16" cy="16" r="14" fill="#dd4814"/><circle cx="16" cy="16" r="6.500" fill="none" stroke="#fff" stroke-width="3" stroke-dasharray="11 2.600"/><g fill="#fff"><circle cx="6.500" cy="16" r="2.500"/><circle cx="21" cy="8" r="2.500"/><circle cx="21" cy="24" r="2.500"/></g>`,
 ps:`<rect x="3" y="3" width="26" height="26" fill="#001d33" stroke="#31c5f0" stroke-width="1.800"/><text x="16" y="22" font-size="16" text-anchor="middle" fill="#31c5f0">Ps</text>`,
 ai:`<rect x="3" y="3" width="26" height="26" fill="#2d1500" stroke="#ff7c00" stroke-width="1.800"/><text x="16" y="22" font-size="16" text-anchor="middle" fill="#ff7c00">Ai</text>`,
 cmd:`<rect x="2" y="5" width="28" height="24" fill="#0a0a0a" stroke="#999" stroke-width="1.500"/><path d="M2 5h28v4H2z" fill="#bbb"/><path d="M3 28L29 10v18z" fill="#333"/><text x="5" y="16" font-size="7" fill="#ddd">C:\_</text>`,
 te:`<rect x="3" y="3" width="26" height="26" rx="5" fill="#111" stroke="#e85a9b" stroke-width="2.200"/><path d="M4 22q0 7 7 7h10q8 0 8-8" fill="none" stroke="#f0a050" stroke-width="2.200"/><text x="8" y="17" font-size="10" fill="#fff">$_</text>`,
 ou:`<rect x="13" y="7" width="16" height="14" fill="#eef" stroke="#1673c4"/><path d="M2 5l15-3v26L2 25z" fill="#0f6cbd"/><circle cx="9.500" cy="15" r="4" fill="none" stroke="#fff" stroke-width="2.200"/><path d="M18 12l4 5 7-9" stroke="#1673c4" stroke-width="2" fill="none"/><path d="M15 19h16v13H15z" fill="#e8aa62"/><path d="M15 19l8 8 8-8" fill="none" stroke="#fff" stroke-width="1.500"/>`,
 gi:`<g transform="rotate(45 16 16)"><rect x="6" y="6" width="10" height="10" fill="#e84e40"/><rect x="17" y="6" width="10" height="10" fill="#8bc34a"/><rect x="6" y="17" width="10" height="10" fill="#64a5f5"/><rect x="17" y="17" width="10" height="10" fill="#fbe063"/></g><path d="M16 4v25M16 10l5 6M16 26l-6-8" stroke="#222" stroke-width="2"/><g fill="#222"><circle cx="16" cy="10" r="2.300"/><circle cx="21" cy="17" r="2.300"/><circle cx="16" cy="25" r="2.300"/></g>`,
 np:`<rect x="3" y="6" width="26" height="21" fill="#e8ecf0" stroke="#888"/><rect x="9" y="9" width="10" height="16" fill="#1976d2"/><path d="M21 11h6M21 14h6M21 17h6M21 20h6" stroke="#999"/>`,
 vs:`<path d="M22 2l7 3v22l-7 3L9 18l-5 4-2-2V12l2-2 5 4zM22 10l-8 6 8 6z" fill="#1f9cf0" fill-rule="evenodd"/>`,
 mo:`<rect x="8" y="4" width="21" height="15" rx="2" fill="#ddd" stroke="#999"/><path d="M10 13h4l2-5 3 7 2-4h6" stroke="#28a" fill="none" stroke-width="1.500"/><path d="M4 10l8 3v15l-8-2z" fill="#bbb" stroke="#777"/><ellipse cx="19" cy="25" rx="8" ry="4" fill="#ccc"/>`,
 xm:`<circle cx="17" cy="17" r="9" fill="none" stroke="#e26a1c" stroke-width="2.200"/><path d="M5 3l21 27M27 3L6 30M5 3h4" stroke="#ddd" stroke-width="1.800" fill="none"/><path d="M10 12a9 9 0 0 0 2 12" stroke="#fc0" fill="none" stroke-width="2"/>`,
 hub:`<circle cx="16" cy="16" r="14" fill="#7d3fa6" stroke="#fff" stroke-width="1.500"/><path d="M9 8l4 2q3-1 6 0l4-2 1 5q2 8-5 9l1 8h-8l1-8q-7-1-5-9z" fill="#fff"/>`,
 su:`<rect x="2" y="2" width="28" height="28" rx="2" fill="#4c4c4c"/><path d="M22 7v5l-8 3 8 3v5l-12 4v-5l8-3-8-3v-5z" fill="#ff9800"/>`,
 sky:`<path d="M9 2q5 0 7 2 13-1 13 12 1 14-8 14-4 0-6-2Q3 28 3 16 1 3 9 2z" fill="#00aff0"/><text x="16" y="23" font-size="19" font-weight="700" text-anchor="middle" fill="#fff">S</text>`,
 wo:`<rect x="14" y="5" width="15" height="22" fill="#fff"/><path d="M16 9h11M16 13h11M16 17h11M16 21h11" stroke="#2b579a" stroke-width="1.600"/><path d="M3 5l15-3v28L3 27z" fill="#2b579a"/><text x="10.500" y="21" font-size="13" font-weight="700" text-anchor="middle" fill="#fff">W</text>`,
 xl:`<rect x="14" y="5" width="15" height="22" fill="#fff"/><path d="M18 9h9M18 13h9M18 17h9M18 21h9M22.500 7v18" stroke="#217346" stroke-width="1.600"/><path d="M3 5l15-3v28L3 27z" fill="#217346"/><text x="10.500" y="21" font-size="13" font-weight="700" text-anchor="middle" fill="#fff">X</text>`,
 sla:`<circle cx="16" cy="16" r="14" fill="#fff"/><g stroke-width="4" stroke-linecap="round"><path d="M8 12h7" stroke="#36c5f0"/><path d="M18 6v8" stroke="#2eb67d"/><path d="M13 6v1" stroke="#36c5f0"/><path d="M8 18h1M13 18v7" stroke="#e01e5a"/><path d="M24 13h1" stroke="#2eb67d"/></g><circle cx="23" cy="23" r="8.500" fill="#d81b60" stroke="#5a0a2a"/><text x="23" y="28" font-size="14" text-anchor="middle" fill="#fff">1</text>`
};

/* Rhino */
row('rTitle',[[svg(I.rh,20),2,22],['Untitled - Rhinoceros 5.0 Educational - [Perspective]',27,369],[svg('<path d="M0 16h14M58 10h9v12h-9zM60 10V7h9v12h-2M116 9l13 13M129 9l-13 13" fill="none" stroke="#8a8a8a" stroke-width="1.300"/>',132,30,'0 0 132 30'),2405,2537]]);
row('rMenu',[['File',9,31],['Edit',49,73],['View',91,122],['Curve',140,178],['Surface',196,245],['Solid',262,294],['Mesh',312,348],['Dimension',366,437],['Transform',455,521],['Tools',540,575],['Analyze',593,644],['Render',661,707],['Panels',725,767],['T-Splines',785,846],['Help',864,895]]);
row('rTabs',[['Standard',9,86,20,75],['CPlanes',90,159,96,148],['Set View',163,235,170,224],['Display',240,302,245,292],['Select',308,363,313,352],['Viewport Layout',368,482,373,472],['Visibility',486,550,489,542],['Transform',556,634,561,624],['Curve Tools',638,728,642,718],['Surface Tools',733,834,737,823],['Solid Tools',838,923,843,912],['Mesh Tools',928,1015,933,1004],['Render Tools',1019,1119,1025,1108],['Drafting',1124,1190,1131,1178],['New in V5',1194,1275,1200,1263]].map(([t,a,b,c,d],i)=>[`<div style="width:${(c-a)/10}rem"></div>`+fit(t,d-c),a,b,'rt'+(i?'':' act')]).concat([[svg('<circle cx="16" cy="16" r="12" fill="none" stroke="#999" stroke-width="3" stroke-dasharray="6 3.400"/><circle cx="16" cy="16" r="3" fill="none" stroke="#999" stroke-width="2"/>',17),2540,2557]]));
const P='page open save print props cut copy paste undo hand rotv zoomd zoomw zoome zooms zoomu four car cplane circ shapes bulb lock layer wheel gball gball2 bball tri gear dim help'.split(' ');
const PX=[25,61,96,131,168,201,236,271,306,339,376,411,446,481,516,551,586,621,657,691,727,760,796,831,865,900,936,971,1013,1041,1077,1111];
row('rBar',cen(P.map((n,i)=>[n,PX[i],[2,8,16,17,18,19,20,21,22,23,24,26,27,28,29,30,31].includes(i)?'hasmore':'']),27));
row('rBar2',cen('rball bball2 cage green1 green2 pyr ybox book'.split(' ').map((n,i)=>[n,26+35*i]),28,'hasmore'),7);
$('rSide').innerHTML='arrow pt pline crv circ2 ell arc rect poly fil srf patch box balls cyl2 mesh puz boom trim split bool three ced ced2 txt move arr rot'.split(' ').map((n,i)=>`<div class="r-tool ${i&&![16,17,18,19,21,22,24,26,27].includes(i)?'more':''}">${svg(I[n],28)}</div>`).join('')+'<div class="r-tool" style="font-size:2rem;padding-left:1.2rem">»</div>';
row('vLabel',[['Perspective',10,86],['<span class="d-block" style="width:.15rem;height:2rem;background:#234"></span>',96,98],[svg('<path d="M3 8h26L16 26z" fill="#111"/>',10),97,107]],0);
row('vTabs',[['Perspective',43,139,'vt act',75],['Top',141,186,'vt',24],['Front',188,243,'vt',35],['Right',245,301,'vt',34],[svg('<path d="M12 3h8v9h9v8h-9v9h-8v-9H3v-8h9z" fill="none" stroke="#888" stroke-width="3"/>',13),303,340,'vt']],43);
const tick=svg('<path d="M6 16l7 8L27 6" fill="none" stroke="#222" stroke-width="3"/>',13.6);
row('osnap',[['End',14,37,59],['Near',69,91,120],['Point',129,151,180],['Mid',190,212,233],['Cen',243,264,288],['Int',298,319,333],['Perp',344,366,392],['Tan',403,425,448],['Quad',458,480,511],['Knot',521,544,570],['Vertex',580,602,639],['Project',648,671,711],['Disable',721,744,787]].flatMap(([t,x,a,b],i)=>[[i<11?tick:'<i></i>',x,x+16,'cb'+(i==11?' mid':i==12?' dis':'')],[t,a,b]]));
row('rStatus',[['CPlane',0,71,'cell',50],['x 3.55',71,181,'cell',41],['y -7.64',181,290,'cell',45],['z 0.00',290,400,'cell',40],['Meters',400,510,'cell',45],['<span class="d-block ms-1 me-1" style="width:1.7rem;height:1.7rem;background:#000"></span>'+fit('Default',49),510,726,'cell justify-content-start'],['Grid Snap',726,821,'cell',68],['Ortho',821,880,'cell',37],['Planar',880,947,'cell',46],['Osnap',947,1015,'cell on',47],['SmartTrack',1015,1122,'cell on',82],['Gumball',1122,1204,'cell on',58],['Record History',1204,1340,'cell',102],['Filter',1340,1396,'cell',34],[fit('Memory use: 368 MB',143),1396,2551,'cell justify-content-start ps-1']]);

/* perspective viewport: construction plane through a projective map, then the mesh */
const pr=(X,Y)=>{const d=1-.042*X+.1*Y;return [((65+188*X+211.1*Y)/d).toFixed(1),((1095+3.8*X-9.2*Y)/d).toFixed(1)].join(' ')};
let g='';
const seg=(a,b,c,d,s,w)=>`<path d="M${pr(a,b)}L${pr(c,d)}" stroke="${s}" stroke-width="${w}"/>`;
for(let X=-42;X<=13;X++)g+=seg(X,-3,X,60,(X+2)%10==0?'#85898e':'#9ba1a8',1.6);
for(let Y=-2;Y<=60;Y++)g+=seg(-42,Y,13,Y,(Y-7)%10==0?'#85898e':'#9ba1a8',1.6);
g+=seg(-2,7,-2,30,'#3f9c3f',3)+seg(-2,7,6,7,'#a33a42',2.6);
const sil=[[540,468],[600,500],[655,512],[700,510],[745,500],[785,482],[835,468],[900,458],[975,455],[1040,456],[1095,448],[1150,415],[1201,373]];
const R=[[1201,373],[1150,495],[1130,620],[1115,780],[1090,940],[1050,1075],[1000,1200],[992,1290],[988,1385]];
const L=[[540,468],[612,582],[640,660],[670,770],[690,850],[712,930],[735,1000],[780,1100],[835,1150],[890,1195],[930,1240],[950,1270],[970,1330],[988,1385]];
const at=(A,y)=>{for(let i=1;i<A.length;i++)if(y<=A[i][1]){const[a,b]=A[i-1],[c,d]=A[i];return a+(c-a)*Math.max(0,(y-b)/(d-b))}return 988};
const outline='M'+sil.concat(R.slice(1),L.slice(0,-1).reverse()).map(p=>p.join(' ')).join('L')+'Z';
let m='';
for(let k=0;k<2;k++)for(let i=0;i<13;i++){
  const y=565+i*62+k*22,yr=y-(k?30:-10),l=at(L,y),r=at(R,yr),w=r-l,a=(k?-1:1)*(50-i*2.5);
  m+=`M${l} ${y}C${l+w*.3} ${y+a} ${l+w*.45} ${y+a*.7} ${l+w*.55} ${y}S${l+w*.8} ${yr-a*.8} ${r} ${yr}`;
}
for(let k=0;k<2;k++)for(let i=1;i<13;i++){
  const u=i/13;let s='';
  for(let j=0;j<=16;j++){
    const t=j/16,y=470+t*900,l=at(L,y),r=at(R,y);
    const q=u+(k?.09:-.07)*Math.sin(t*Math.PI*1.5+u*2)*Math.sin(u*Math.PI);
    s+=(j?'L':'M')+(l+(r-l)*q).toFixed(1)+' '+y.toFixed(1);
  }
  m+=s;
}
for(let i=0;i<7;i++){m+=`M953 548Q${880+i*24} ${600+20*Math.sin(i)} ${830+i*40} ${700+i%2*30}`;m+=`M1201 373Q1110 ${470+i*14} ${1000-i*14} ${450+i*22}`}
for(let i=0;i<5;i++)m+=`M863 1022Q${840+i*30} ${940-i*4} ${790+i*60} ${860+i*9}`;
const X=[[826,313],[1201,373],[540,468],[953,548],[863,1022],[1219,1117],[597,1265],[988,1385]];
g+=`<g transform="scale(.72067 .40816) translate(0 588)" fill="none" stroke="#a50a12" stroke-linejoin="round"><clipPath id="cp"><path d="${outline}"/></clipPath>
<path d="M826 313L1201 373 1219 1117 988 1385 597 1265 540 468ZM826 313L863 1022M863 1022L597 1265M863 1022L1219 1117M540 468L953 548 1201 373M953 548L988 1385" vector-effect="non-scaling-stroke" stroke-width="1.200"/>
<path d="${outline}" fill="#960a0e" fill-opacity=".66" vector-effect="non-scaling-stroke" stroke-width="1.200"/>
<g clip-path="url(#cp)"><path d="${m}" vector-effect="non-scaling-stroke" stroke-width="1"/></g></g>`;
g+=X.map(([x,y])=>{const a=x/1.3876,b=240+y/2.45;return `<path d="M${a-5} ${b-5}l10 10M${a+5} ${b-5}l-10 10M${a-5} ${b}h10" stroke="#a00" stroke-width="2.200"/>`}).join('');
g+='<path d="M89 1199v35l34 5M89 1234l13-13" fill="none" stroke="#707070" stroke-width="1.600"/><g font-family="Liberation Sans" font-size="15" fill="#555"><text x="92" y="1203">z</text><text x="105" y="1225">y</text><text x="125" y="1243">x</text></g>';
$('view').innerHTML=g;

/* Grasshopper */
row('gTitle',[['Grasshopper - mesh-subd-modeling',1139,1379],[svg('<path d="M0 15h12M58 9h12v12H58zM117 9l12 12M129 9l-12 12" fill="none" stroke="#111" stroke-width="1.400"/>',130,30,'0 0 130 30'),2796,2926]],1131);
row('gMenu',[['File',1148,1167],['Edit',1191,1213],['View',1238,1266],['Display',1290,1332],['Solution',1357,1403],['Help',1428,1454],['mesh-subd-modeling',2816,2936]],1131);
row('gTabs',[['Params',1131,1199,'g-first',47],['Maths',1209,1246],['Sets',1268,1295],['Vector',1317,1356],['Curve',1376,1414],['Surface',1434,1482],['Mesh',1504,1538],['Intersect',1558,1612],['Transform',1635,1698],['Display',1718,1765],['TSplines',1785,1838],['Wb',1860,1881],['Quokka',1900,1949],['Millipede',1969,2026],['Kangaroo2',2047,2113],['M+',2136,2154],['Human',2177,2220],['Volvox',2242,2284],['Bengesht',2305,2363],['TopOpt',2386,2432],['User',2452,2481],['Tarsier',2502,2546],['ROS.GH',2567,2622],['Kangaroo',2643,2702]],1131);
const grp=(t,w,c,a,b,ics)=>[`<div class="g-ics line" id="g${t}"></div><div class="g-lab"><div style="width:${(c-w/2-a)/10}rem"></div>${fit(t,w)}<i>+</i></div>`,a,b,'g-grp',0,ics];
const G=[grp('Geometry',56,1403,1133,1688,'hx:1152 hv:1188 |:1210 ho:1236 ha:1271 hs:1306 hl:1340 hp:1375 hq:1410 |:1434 hb:1457 hc:1493 hg:1527 hm:1563 ht:1598 hd:1633 hr:1669'),
 grp('Primitive',47,1759,1694,1839,'hbo:1713 h7:1747 h01:1783 hA:1818'),
 grp('Input',30,1994,1843,2153,'sl:1863 pan:1898 |:1921 bt:1945 kn:1980 md:2015 vl:2050 |:2074 pk:2098 gr:2133'),
 grp('Util',18,2272,2158,2398,'ch:2176 tr:2212 |:2236 ad:2260 al:2295 |:2319 cl:2343 fl:2376')];
row('gRibbon',G,1131);
const vs=c=>['<span></span>',c-.6,c+.6,'vsep'];
['Geometry','Primitive','Input','Util'].forEach((t,i)=>row('g'+t,G[i][5].split(' ').map(s=>{const[n,c]=s.split(':');return n=='|'?vs(+c):[svg(I[n],30),+c-15,+c+15]}),G[i][1]+1));
const ic=(n,c,s)=>[svg(I[n],s),c-s/2,c+s/2];
row('gBar',[ic('gopen',1151,28),ic('gsave',1189,28),vs(1213),[`${fit('195%',38)}<span class="ms-auto"></span>${svg('<path d="M5 10l11 12 11-12" fill="none" stroke="#666" stroke-width="3"/>',12)}`,1219,1306,'combo'],ic('zx',1325,24),ic('dd',1348,11),ic('eye',1375,28),ic('dd',1401,11),ic('sk',1426,28),ic('d1',2711,28),ic('d2',2748,28),[svg(I.d3,28),2767,2801,'sel'],vs(2812),ic('d4',2839,28),ic('d5',2874,27),vs(2896),ic('d6',2916,26),ic('dd',2938,11)],1131);
row('mini',[ic('py',1149,25),ic('sl',1184,30),ic('pan',1219,30),ic('gb',1254,30),ic('h01',1289,30)],1132);
row('gStatus',[ic('info',1142,20),['Save successfully completed... (17 seconds ago)',1156,1441],['<span class="text-secondary">'+fit('0.9.0076',52)+'</span>',2874,2926],[svg('<g fill="#aaa"><path d="M22 6h4v4h-4zM22 14h4v4h-4zM22 22h4v4h-4zM14 14h4v4h-4zM14 22h4v4h-4zM6 22h4v4H6z"/></g>',16),2931,2947]],1131);

/* canvas */
const KY=[493,556.5,620.5,684,747.5,810.6,874.5,940];
let w='<path d="'+[1396,1763,2129,2495,2861].map(x=>`M${x} 402V1206`).join('')+[524,645,767,889.5,1011,1133].map(y=>`M1131 ${y}H2949`).join('')+'" stroke="#b9b5ae" stroke-width="2" fill="none"/>';
const grip=(x,y,r=11)=>`<circle cx="${x}" cy="${y}" r="${r-1.5}" fill="#fff" stroke="#000" stroke-width="3.500"/>`;
w+='<g fill="none" stroke="#000" stroke-opacity=".6" stroke-width="7">';
KY.forEach(y=>{y+=28;const k=80+.28*Math.abs(751-y);w+=`<path d="M1563 ${y}C${1563+k} ${y} ${1728-k} 751 1728 751"/>`});
w+='<path d="M1570 1075C1720 1075 1740 865 1912 865"/></g><g fill="none"><path d="M1872 751C1890 751 1895 767 1912 767" stroke="#575550" stroke-width="10"/><path d="M1872 751C1890 751 1895 767 1912 767" stroke="#c8c4bc" stroke-width="2.500"/></g>';
KY.forEach(y=>w+=grip(1554,y+28));
w+=grip(1736,751)+grip(1864,751)+grip(1921,767,12)+grip(1921,865,12)+grip(1559,1075,12)+[743,792,841,889].map(y=>grip(2172,y,12)).join('');
const TL='lengthAdjust="spacingAndGlyphs" textLength';
w+=`<defs><linearGradient id="a" x2="0" y2="1"><stop stop-color="#ececf2"/><stop offset=".45" stop-color="#cdcdd8"/><stop offset=".46" stop-color="#a5a3b6"/><stop offset="1" stop-color="#8f8d9e"/></linearGradient><linearGradient id="b" x2="0" y2="1"><stop stop-color="#f8f8f8"/><stop offset=".15" stop-color="#e6e6e6"/><stop offset="1" stop-color="#c4c4c4"/></linearGradient><linearGradient id="c" x2="0" y2="1"><stop stop-color="#bbb"/><stop offset=".07" stop-color="#888"/><stop offset=".08" stop-color="#4c4c4c"/><stop offset="1" stop-color="#303030"/></linearGradient><linearGradient id="d" x2="0" y2="1"><stop stop-color="#ff6464"/><stop offset="1" stop-color="#bf4145"/></linearGradient><radialGradient id="e"><stop stop-color="#f4f4f4"/><stop offset="1" stop-color="#bdbdbd"/></radialGradient></defs>
<g font-size="25" fill="#111">
<rect x="1737" y="727" width="127" height="49" rx="6" fill="url(#a)" stroke="#222" stroke-width="2"/><text x="1757" y="759" ${TL}="84">is_fixed</text>
<rect x="1922" y="713.500" width="249" height="205" rx="8" fill="url(#b)" stroke="#3b3b3b" stroke-width="2"/>
<text x="1939" y="775" ${TL}="85">is_fixed</text><text x="2011" y="873" ${TL}="12.500">k</text><text x="2106" y="750.500" ${TL}="40">out</text><text x="2106" y="799.500" ${TL}="15">P</text><text x="2106" y="848.500" ${TL}="12">L</text><text x="2106" y="897" ${TL}="24">M</text>
<rect x="2037" y="718.500" width="58.500" height="196" rx="7" fill="url(#c)" stroke="#0a0a0a" stroke-width="2.500"/><rect x="2039.500" y="721" width="53.500" height="191" rx="5" fill="none" stroke="#999" stroke-width="1.200"/>
<text transform="translate(2077 870) rotate(-90)" ${TL}="111" font-weight="700" font-size="31" fill="#fff">Python</text>
<path d="M1951 924h85l10-12 10 12h86v37h-191z" fill="url(#d)" stroke="#200" stroke-width="1.800"/><text x="1958" y="946" ${TL}="172" font-family="Liberation Mono" font-size="25" fill="#4a1010" xml:space="preserve">79ms (100%)</text>
<rect x="1168" y="1051" width="391" height="49" rx="7" fill="url(#b)" stroke="#333" stroke-width="2"/><path d="M1217 1051v49h-42q-7 0-7-7v-35q0-7 7-7z" fill="url(#a)" stroke="#333" stroke-width="2"/>
<path d="M1240 1075.500h294${[0,1,2,3,4,5,6,7,8,9,10].map(i=>`M${1240.5+i*29.3} 1075v-${i%5?9:14}`).join('')}" fill="none" stroke="#b0b0b0" stroke-width="1.500"/><rect x="1341" y="1058" width="26" height="22" fill="#dedede"/>
<path d="M1328 1067l8 8.500-8 8.500-8-8.500z" fill="#fff" stroke="#000" stroke-width="3"/><text x="1185.500" y="1083" ${TL}="12">k</text><text x="1347" y="1082" ${TL}="14">3</text></g>
<path d="M2877 1147h9l3 6 5 2-8 10v9q-8-4-3-16z"/><circle cx="2910" cy="1169" r="25" fill="url(#e)" stroke="#777" stroke-width="2"/><circle cx="2910" cy="1169" r="22.500" fill="none" stroke="#fff" stroke-width="1.500"/><path d="M2889 1150l8 7-9 3zM2920 1148l8 3-6 7zM2932 1176v8l-8-4zM2896 1191l4-7 4 8z" fill="#fff"/>`;
$('wires').innerHTML=w;
KY.forEach((y,i)=>{const v=[0,1,0,0,1,0,1,1][i];
 $('canvas').insertAdjacentHTML('beforeend',`<div class="knode d-flex align-items-center" style="top:${(y-402)/10}rem"><div class="kname">${fit('key '+i,60)}</div><div class="kval d-flex align-items-center justify-content-center">${fit(v?'True':'False',v?49:57)}</div></div>`)});

/* taskbars */
const apps=[['rh','on rh'],['ex','on two'],['cr','on'],['st',''],['ub',''],['ps','on'],['cmd','on'],['te','on'],['ou','on two'],['gi',''],['ai','on'],['np','on'],['vs','on'],['mo','on'],['xm','on'],['hub','on'],['su','on two'],['sky','on'],['wo','on two'],['xl','on'],['sla','on sl']];
const clock=`<div class="clock">${fit('10:18',34)}${fit('02.10.2019',70)}</div>`;
['bar1','bar2'].forEach((id,k)=>{
 const it=[ic('win',30,29),ic('find',91,28),ic('tv',150,28)].concat(apps.map(([n,c],i)=>{const m=214.5+i*61.95;return [svg(I[n],n=='rh'?30:28),m-30,m+30,'app '+c]}));
 it.push(...(k?[[clock,2482,2552]]:[
  [svg('<path d="M0 23l8-10 8 10M31 28q0-15 15-17M36 28q0-9 10-11M41 28q0-4 5-5" fill="none" stroke="#fff" stroke-width="1.700"/><circle cx="45" cy="27" r="1.600" fill="#fff"/><path d="M58 17h3l5-5v16l-5-5h-3zM69 16l7 8M76 16l-7 8" fill="none" stroke="#fff" stroke-width="1.400"/>',78,40,'0 0 78 40'),2325,2403],
  [clock,2416,2486],
  [svg('<path d="M1 4h20v18h-7l-3 4-3-4H1z" fill="none" stroke="#fff" stroke-width="1.500"/>',22,28,'0 0 22 28'),2508,2530],
  ['<span></span>',2553.5,2554.5,'h-100 bg-secondary']]));
 row(id,it);
});

/* condense or widen each label to its measured width */
const labels=[...document.querySelectorAll('.fit')].map(e=>[e,e.dataset.w*.8,e.getBoundingClientRect().width]);
labels.forEach(([e,want,have])=>{
 e.style.width=want.toFixed(1)+'px';
 e.style.transform=`scaleX(${(want/have).toFixed(4)})`;
 e.style.textAlign='left';
});
</script>
</body>
</html>
